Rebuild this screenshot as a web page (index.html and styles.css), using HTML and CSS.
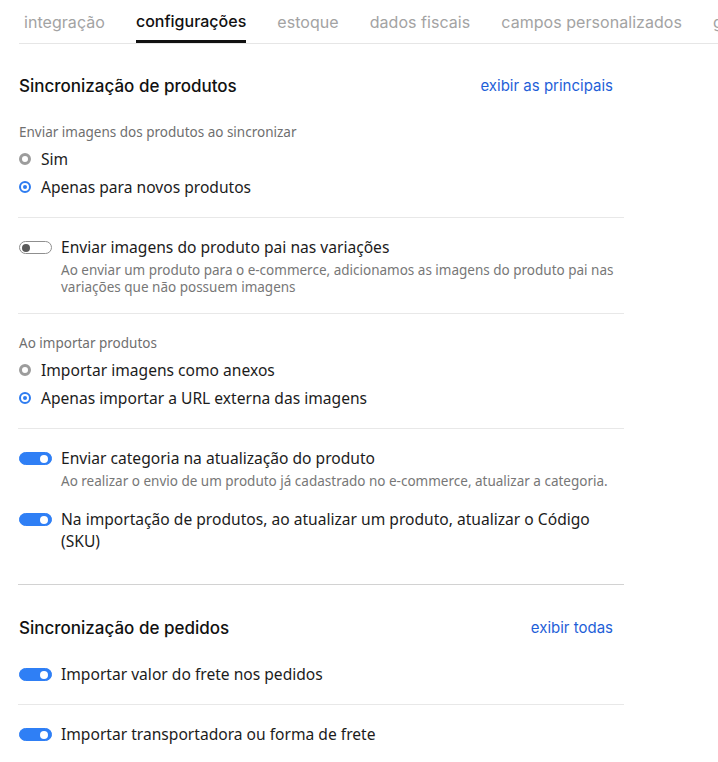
FILE: index.html
```html
<!DOCTYPE html>
<html lang="pt-BR">
<head>
<meta charset="utf-8">
<title>Configurações</title>
<link rel="stylesheet" href="styles.css">
</head>
<body>
<nav class="tabs">
  <a class="tab">integração</a>
  <a class="tab active">configurações</a>
  <a class="tab">estoque</a>
  <a class="tab">dados fiscais</a>
  <a class="tab">campos personalizados</a>
  <a class="tab">gatilhos</a>
</nav>
<main class="content">
  <section class="section">
    <header class="section-head">
      <h2 class="section-title">Sincronização de produtos</h2>
      <a class="section-link">exibir as principais</a>
    </header>

    <div class="group group-first">
      <div class="group-label">Enviar imagens dos produtos ao sincronizar</div>
      <label class="radio"><span class="radio-dot"></span>Sim</label>
      <label class="radio"><span class="radio-dot checked"></span>Apenas para novos produtos</label>
    </div>

    <div class="group toggles">
      <div class="toggle-row">
        <span class="switch"></span>
        <div class="toggle-text">
          <div class="toggle-title">Enviar imagens do produto pai nas variações</div>
          <div class="toggle-desc">Ao enviar um produto para o e-commerce, adicionamos as imagens do produto pai nas variações que não possuem imagens</div>
        </div>
      </div>
    </div>

    <div class="group">
      <div class="group-label">Ao importar produtos</div>
      <label class="radio"><span class="radio-dot"></span>Importar imagens como anexos</label>
      <label class="radio"><span class="radio-dot checked"></span>Apenas importar a URL externa das imagens</label>
    </div>

    <div class="group toggles last">
      <div class="toggle-row">
        <span class="switch on"></span>
        <div class="toggle-text">
          <div class="toggle-title">Enviar categoria na atualização do produto</div>
          <div class="toggle-desc">Ao realizar o envio de um produto já cadastrado no e-commerce, atualizar a categoria.</div>
        </div>
      </div>
      <div class="toggle-row">
        <span class="switch on"></span>
        <div class="toggle-text">
          <div class="toggle-title">Na importação de produtos, ao atualizar um produto, atualizar o Código (SKU)</div>
        </div>
      </div>
    </div>
  </section>

  <section class="section section-second">
    <header class="section-head">
      <h2 class="section-title">Sincronização de pedidos</h2>
      <a class="section-link">exibir todas</a>
    </header>
    <div class="group toggles first-order">
      <div class="toggle-row">
        <span class="switch on"></span>
        <div class="toggle-text">
          <div class="toggle-title">Importar valor do frete nos pedidos</div>
        </div>
      </div>
    </div>
    <div class="group toggles plain">
      <div class="toggle-row">
        <span class="switch on"></span>
        <div class="toggle-text">
          <div class="toggle-title">Importar transportadora ou forma de frete</div>
        </div>
      </div>
    </div>
  </section>
</main>
</body>
</html>
```

FILE: styles.css
```css
* { box-sizing: border-box; }
html, body { margin: 0; padding: 0; background: #fff; }
body {
  font-family: "Noto Sans", "Open Sans", sans-serif;
  color: #1c1c1c;
  overflow: hidden;
  width: 718px;
}

.tabs {
  display: flex;
  gap: 31px;
  margin-left: 19px;
  padding-left: 5px;
  height: 44px;
  border-bottom: 1px solid #e6e6e6;
  white-space: nowrap;
  overflow: hidden;
}
.tab {
  font-family: "Inter", sans-serif;
  font-size: 16px;
  letter-spacing: 0.05px;
  color: #a3a3a3;
  line-height: 45px;
  height: 43px;
  flex: none;
}
.tab.active {
  color: #111;
  font-weight: 500;
  letter-spacing: 0;
  border-bottom: 3px solid #111;
  line-height: 42px;
}

.content {
  width: 606px;
  margin-left: 18px;
}

.section-head {
  display: flex;
  justify-content: space-between;
  align-items: center;
  margin-top: 30px;
  padding-left: 1px;
  padding-right: 11px;
}
.section-title {
  margin: 0;
  font-family: "Inter", sans-serif;
  font-size: 17px;
  font-weight: 500;
  line-height: 24px;
  color: #111;
}
.section-link {
  font-family: "Inter", sans-serif;
  font-size: 15px;
  color: #1f5fd8;
  line-height: 24px;
}

.group {
  border-bottom: 1px solid #e8e8e8;
  padding: 20px 0 16px 1px;
}
.group-first { padding-top: 25px; }
.group-label {
  font-size: 13.5px;
  line-height: 18px;
  color: #6f6f6f;
  margin-bottom: 4px;
}
.radio {
  display: flex;
  align-items: center;
  gap: 10px;
  height: 28px;
  font-size: 15.6px;
  color: #1c1c1c;
}
.radio-dot {
  width: 12px;
  height: 12px;
  border-radius: 50%;
  border: 3px solid #9c9c9c;
  flex: none;
  background: #fff;
}
.radio-dot.checked {
  border: 2px solid #2e7cf0;
  position: relative;
}
.radio-dot.checked::after {
  content: "";
  position: absolute;
  left: 2px;
  top: 2px;
  width: 4px;
  height: 4px;
  border-radius: 50%;
  background: #2e7cf0;
}

.toggles { padding-top: 18px; padding-bottom: 17px; }
.toggles.last {
  padding-bottom: 32px;
  border-bottom-color: #d2d2d2;
}
.toggle-row {
  display: flex;
  gap: 9px;
  align-items: flex-start;
}
.toggle-row + .toggle-row { margin-top: 18px; }
.switch {
  flex: none;
  width: 33px;
  height: 13px;
  margin-top: 5px;
  border-radius: 7px;
  border: 1px solid #8f8f8f;
  background: #fff;
  position: relative;
}
.switch::after {
  content: "";
  position: absolute;
  left: 2px;
  top: 1.5px;
  width: 8px;
  height: 8px;
  border-radius: 50%;
  background: #5a5a5a;
}
.switch.on {
  background: #2f7ff5;
  border-color: #2f7ff5;
}
.switch.on::after {
  left: auto;
  right: 3px;
  background: #fff;
}
.toggle-title {
  font-size: 15.6px;
  line-height: 22px;
  color: #1c1c1c;
}
.toggle-desc {
  font-size: 13.5px;
  line-height: 17px;
  color: #777;
  margin-top: 4px;
}

.section-second .section-head { margin-top: 31px; }
.toggles.first-order { padding-top: 23px; padding-bottom: 19px; }
.toggles.plain { border-bottom: none; padding-top: 18px; }
```
